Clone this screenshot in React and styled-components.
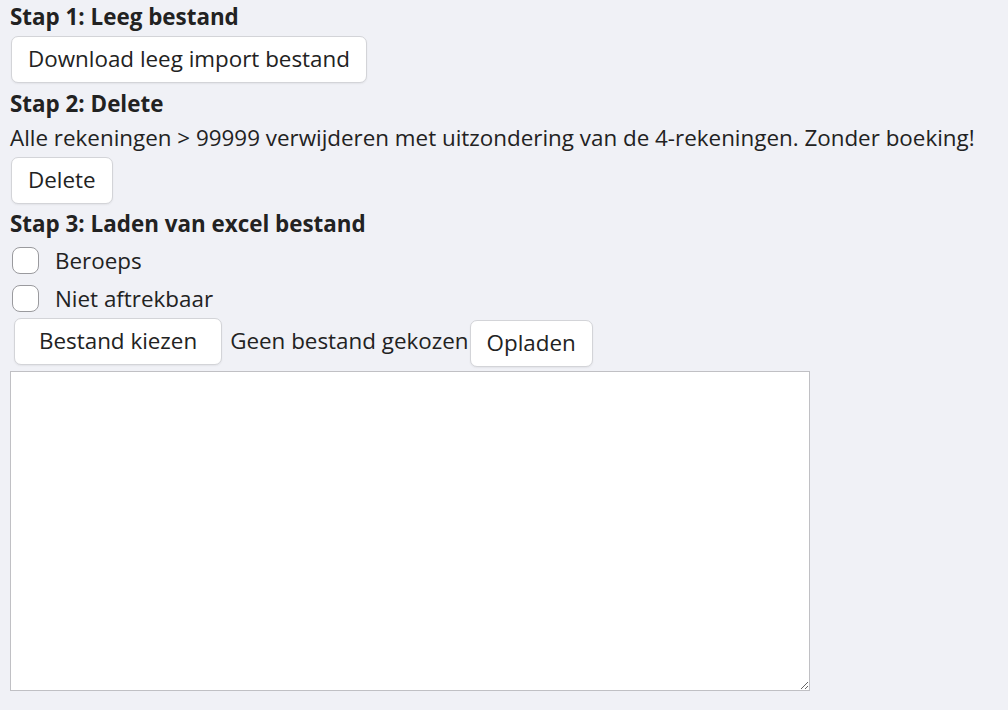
import React from "react"
import styled, { createGlobalStyle } from "styled-components"

const GlobalStyle = createGlobalStyle`
  html, body {
    margin: 0;
    padding: 0;
    background: #f0f1f6;
  }
  body {
    font-family: "Open Sans", "Liberation Sans", sans-serif;
    font-size: 22.4px;
    color: #222222;
  }
`

const Page = styled.div`
  padding: 0 10px 10px;
  display: flex;
  flex-direction: column;
  align-items: flex-start;
`

const Heading = styled.div`
  font-weight: 700;
  line-height: 34px;
`

const Text = styled.div`
  line-height: 34px;
`

const Button = styled.button`
  font-family: inherit;
  font-size: 22.4px;
  color: #222222;
  background: #ffffff;
  border: 1px solid #d3d4d8;
  border-radius: 7px;
  box-shadow: 0 1px 2px rgba(0, 0, 0, 0.06);
  height: 47px;
  padding: 0 ${(p) => p.$pad || "16px"} 2px;
  line-height: 30px;
  margin: ${(p) => p.$margin || "2px 0 4px 1px"};
  cursor: pointer;
`

const CheckRow = styled.label`
  display: flex;
  align-items: center;
  gap: 16px;
  height: 38px;
  padding-left: 2px;
`

const Box = styled.input.attrs({ type: "checkbox" })`
  appearance: none;
  margin: 0;
  width: 27px;
  height: 27px;
  border: 1.5px solid #9a9a9e;
  border-radius: 8px;
  background: #ffffff;
`

const FileRow = styled.div`
  display: flex;
  align-items: flex-start;
  margin-top: 1px;
  padding-left: 4px;
`

const FileName = styled.span`
  line-height: 30px;
  margin: 8px 1px 0 8px;
`

const Area = styled.textarea`
  display: block;
  box-sizing: border-box;
  width: 800px;
  height: 320px;
  margin-top: 4px;
  background: #ffffff;
  border: 1px solid #c0c0c4;
  border-radius: 0;
  font-family: inherit;
  font-size: 16px;
  resize: both;
`

export default function App() {
  return (
    <>
      <GlobalStyle />
      <Page>
        <Heading>Stap 1: Leeg bestand</Heading>
        <Button>Download leeg import bestand</Button>
        <Heading>Stap 2: Delete</Heading>
        <Text>
          Alle rekeningen &gt; 99999 verwijderen met uitzondering van de
          4-rekeningen. Zonder boeking!
        </Text>
        <Button $margin="2px 0 3px 1px">Delete</Button>
        <Heading>Stap 3: Laden van excel bestand</Heading>
        <CheckRow>
          <Box />
          Beroeps
        </CheckRow>
        <CheckRow>
          <Box />
          Niet aftrekbaar
        </CheckRow>
        <FileRow>
          <Button $margin="0" $pad="24px">
            Bestand kiezen
          </Button>
          <FileName>Geen bestand gekozen</FileName>
          <Button $margin="2px 0 0 0">Opladen</Button>
        </FileRow>
        <Area />
      </Page>
    </>
  )
}
